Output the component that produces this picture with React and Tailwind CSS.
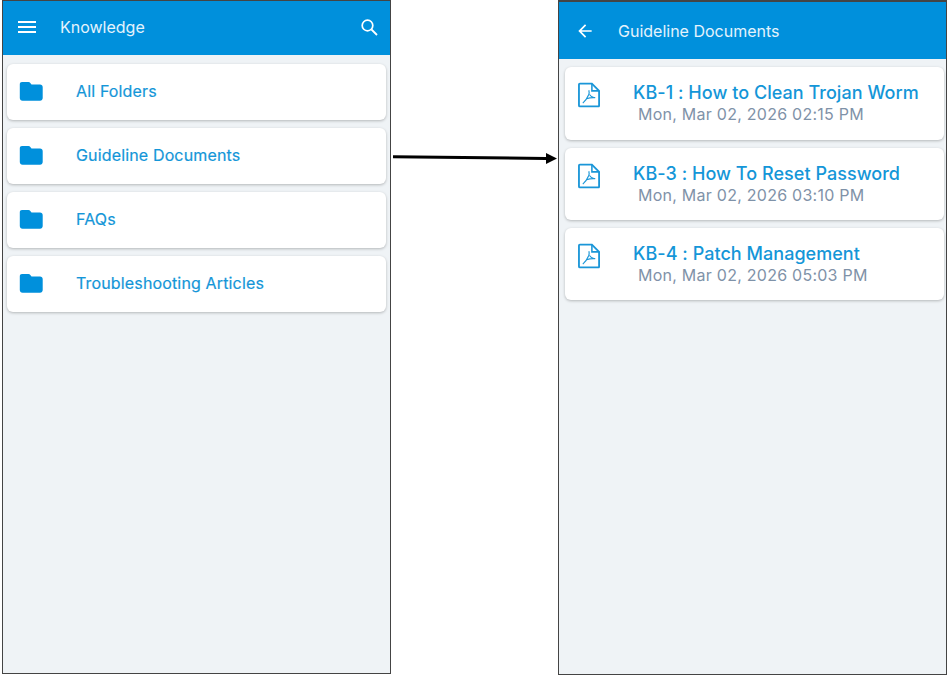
const folders = ['All Folders', 'Guideline Documents', 'FAQs', 'Troubleshooting Articles']

const documents = [
  { title: 'KB-1 : How to Clean Trojan Worm', date: 'Mon, Mar 02, 2026 02:15 PM', height: 'h-[73px]' },
  { title: 'KB-3 : How To Reset Password', date: 'Mon, Mar 02, 2026 03:10 PM', height: 'h-[72px]' },
  { title: 'KB-4 : Patch Management', date: 'Mon, Mar 02, 2026 05:03 PM', height: 'h-[72px]' },
]

function MaterialIcon({ d, className }) {
  return (
    <svg className={className} viewBox="0 0 24 24" fill="currentColor">
      <path d={d} />
    </svg>
  )
}

function FolderIcon() {
  return (
    <svg className="w-[24px] h-[20px] ml-[12px] shrink-0 text-[#0090dc]" viewBox="0 0 24 20" fill="currentColor">
      <path d="M3 1h6.500c.8 0 1.300.4 1.800 1l1.200 1.500H21c1.600 0 2.700 1.100 2.700 2.700V17c0 1.600-1.100 2.700-2.700 2.700H3.500C1.900 19.700.8 18.600.8 17V3.200C.8 1.900 1.700 1 3 1z" />
    </svg>
  )
}

function PdfIcon() {
  return (
    <svg className="w-[23px] h-[26px] ml-[13px] mt-[15px] shrink-0 text-[#1a96d8]" viewBox="0 0 24 26" fill="none" stroke="currentColor">
      <path d="M2 1.200h12.500l7.500 7.500v15.600a.6.6 0 0 1-.6.6H2a1 1 0 0 1-1-1V2.200a1 1 0 0 1 1-1z" strokeWidth="1.900" />
      <path d="M14.500 1.200v7.500H22" strokeWidth="1.600" />
      <path d="M5 21.500c2.500-2 4.500-5 6-8.500.6-1.500.8-3.500.3-5M9 17c2.500-1 5.500-1.500 9-1.200M12 12.500c1 1.500 2.500 2.500 4.500 3.200" strokeWidth="1.200" />
    </svg>
  )
}

function FolderRow({ label }) {
  return (
    <div className="flex items-center h-14 pb-[2px] bg-white rounded-md shadow-[0_1px_3px_rgba(0,0,0,0.25)]">
      <FolderIcon />
      <span className="ml-[33px] text-[16px] tracking-[0.15px] text-[#1496d8] [-webkit-text-stroke:0.2px_#1496d8]">{label}</span>
    </div>
  )
}

function DocumentRow({ doc }) {
  return (
    <div className={`flex bg-white rounded-md shadow-[0_1px_3px_rgba(0,0,0,0.25)] ${doc.height}`}>
      <PdfIcon />
      <div className="ml-[32px] pt-[13px]">
        <div className="text-[18px] leading-[25px] font-medium tracking-[0.04px] text-[#1496d8]">{doc.title}</div>
        <div className="ml-[5px] text-[16px] leading-[19px] tracking-[0.25px] text-[#7f92a8]">{doc.date}</div>
      </div>
    </div>
  )
}

export default function App() {
  return (
    <div className="relative flex w-[947px] h-[676px] bg-white font-['Inter',sans-serif]">
      {/* Knowledge screen */}
      <div className="ml-[2px] w-[389px] h-[674px] flex flex-col border border-[#444] bg-[#eff3f6]">
        <div className="flex items-center h-[54px] pb-[2px] bg-[#0090dc] text-white shrink-0">
          <MaterialIcon
            className="w-[24px] h-[24px] ml-[12px] shrink-0"
            d="M3 18h18v-2H3v2zm0-5h18v-2H3v2zm0-7v2h18V6H3z"
          />
          <span className="ml-[21px] text-[16px] text-[#e4f3fc]">Knowledge</span>
          <svg className="w-[17px] h-[17px] ml-auto mr-[12px]" viewBox="0 0 17 17" fill="none" stroke="currentColor">
            <circle cx="6.500" cy="6.500" r="5.300" strokeWidth="1.700" />
            <path d="M10.500 10.500L16 16" strokeWidth="1.800" />
          </svg>
        </div>
        <div className="flex flex-col gap-2 pt-[9px] px-1">
          {folders.map((label) => (
            <FolderRow key={label} label={label} />
          ))}
        </div>
      </div>

      {/* Guideline Documents screen */}
      <div className="ml-[167px] w-[389px] h-[675px] flex flex-col border border-[#444] border-t-2 bg-[#eff3f6]">
        <div className="flex items-center h-[57px] bg-[#0090dc] text-white shrink-0">
          <MaterialIcon
            className="w-[20px] h-[20px] ml-[16px] shrink-0"
            d="M20 11H7.830l5.590-5.590L12 4l-8 8 8 8 1.410-1.410L7.830 13H20v-2z"
          />
          <span className="ml-[23px] text-[16px] text-[#e4f3fc]">Guideline Documents</span>
        </div>
        <div className="flex flex-col gap-2 pt-[8px] px-[6px] pr-[2px]">
          {documents.map((doc) => (
            <DocumentRow key={doc.title} doc={doc} />
          ))}
        </div>
      </div>

      {/* connector between the two screens */}
      <svg className="absolute left-[392px] top-[150px] w-[166px] h-[16px]" viewBox="0 0 166 16">
        <path d="M1 5.200 L154 7 L154 3 L165 8.500 L154 14 L154 10 L1 8.200 Z" fill="#000" />
      </svg>
    </div>
  )
}
